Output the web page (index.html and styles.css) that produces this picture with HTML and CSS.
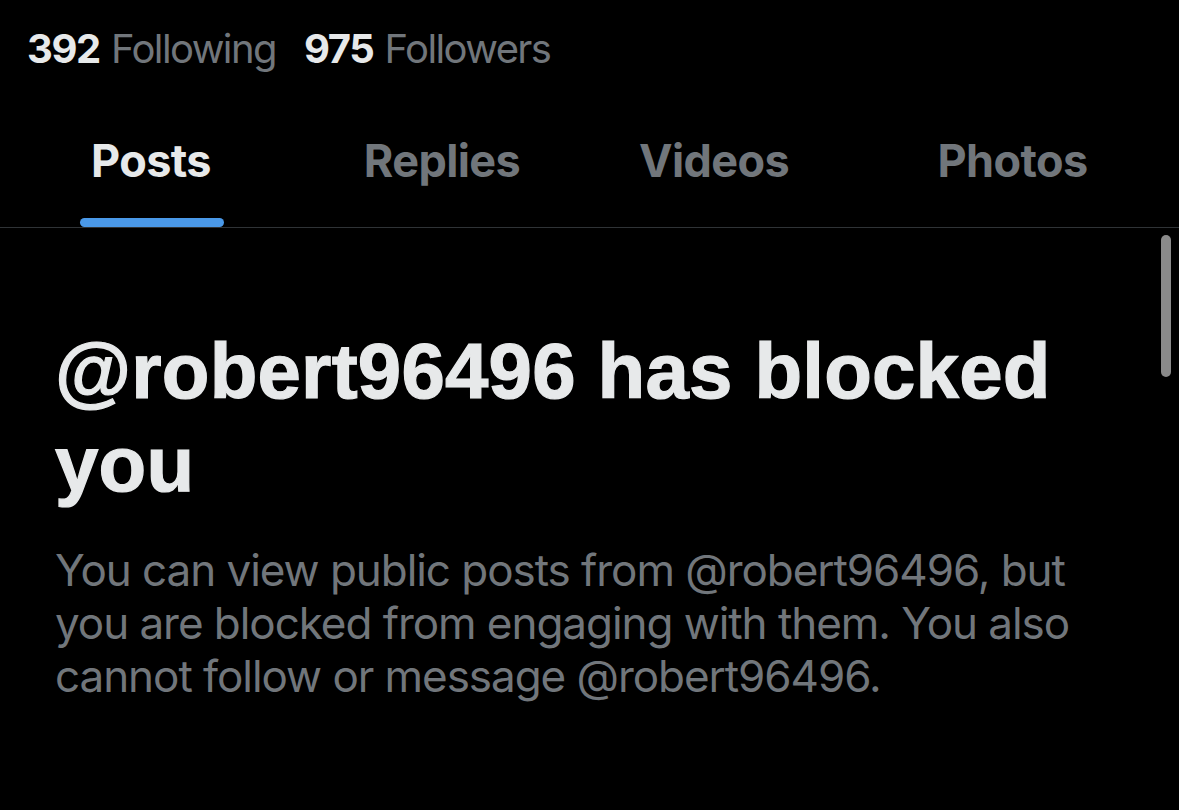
FILE: index.html
```html
<!DOCTYPE html>
<html lang="en">
<head>
<meta charset="utf-8">
<title>Blocked</title>
<link rel="stylesheet" href="styles.css">
</head>
<body>
<div class="screen">
  <div class="stats">
    <span class="stat"><b class="num">392</b> <span class="label">Following</span></span>
    <span class="stat"><b class="num">975</b> <span class="label">Followers</span></span>
  </div>
  <nav class="tabs">
    <div class="tab active"><span class="tab-text">Posts</span><span class="indicator"></span></div>
    <div class="tab"><span class="tab-text">Replies</span></div>
    <div class="tab"><span class="tab-text">Videos</span></div>
    <div class="tab"><span class="tab-text">Photos</span></div>
  </nav>
  <main class="content">
    <div class="scrollbar"></div>
    <h1 class="title">@robert96496 has blocked you</h1>
    <p class="desc">You can view public posts from @robert96496, but you are blocked from engaging with them. You also cannot follow or message @robert96496.</p>
  </main>
</div>
</body>
</html>
```

FILE: styles.css
```css
* { box-sizing: border-box; }
html, body {
  margin: 0;
  padding: 0;
  background: #000;
}
.screen {
  width: 1179px;
  height: 810px;
  background: #000;
  overflow: hidden;
  font-family: Inter, "Noto Sans", sans-serif;
}
.stats {
  display: flex;
  gap: 28px;
  padding: 24px 0 0 27px;
  height: 100px;
  font-size: 40px;
  line-height: 50px;
}
.num {
  color: #e7e9ea;
  font-weight: 700;
  letter-spacing: -1.4px;
}
.label {
  color: #71767b;
  font-weight: 400;
  letter-spacing: -1.6px;
}
.tabs {
  display: grid;
  grid-template-columns: 302px 280px 264px 1fr;
  height: 128px;
  border-bottom: 1px solid #2f3336;
}
.tab {
  position: relative;
  display: flex;
  justify-content: center;
  padding-top: 34px;
  font-size: 45px;
  font-weight: 700;
  line-height: 54px;
  letter-spacing: -0.6px;
  color: #71767b;
}
.tab.active { color: #e7e9ea; }
.tab-text { position: relative; }
.indicator {
  position: absolute;
  left: 80px;
  width: 144px;
  bottom: 0;
  height: 9px;
  border-radius: 5px;
  background: #4a99e9;
}
.content {
  position: relative;
  padding: 97px 40px 0 55px;
}
.scrollbar {
  position: absolute;
  right: 8px;
  top: 7px;
  width: 10px;
  height: 142px;
  border-radius: 5px;
  background: #8a8a8a;
}
.title {
  margin: 0;
  font-family: "Liberation Sans", Arial, sans-serif;
  font-weight: 700;
  font-size: 78px;
  line-height: 93px;
  color: #e7e9ea;
  -webkit-text-stroke: 1.2px #e7e9ea;
  letter-spacing: 0.2px;
}
.desc {
  margin: 33px 0 0;
  font-size: 44px;
  line-height: 53px;
  font-weight: 400;
  letter-spacing: -1.05px;
  color: #71767b;
}
```
